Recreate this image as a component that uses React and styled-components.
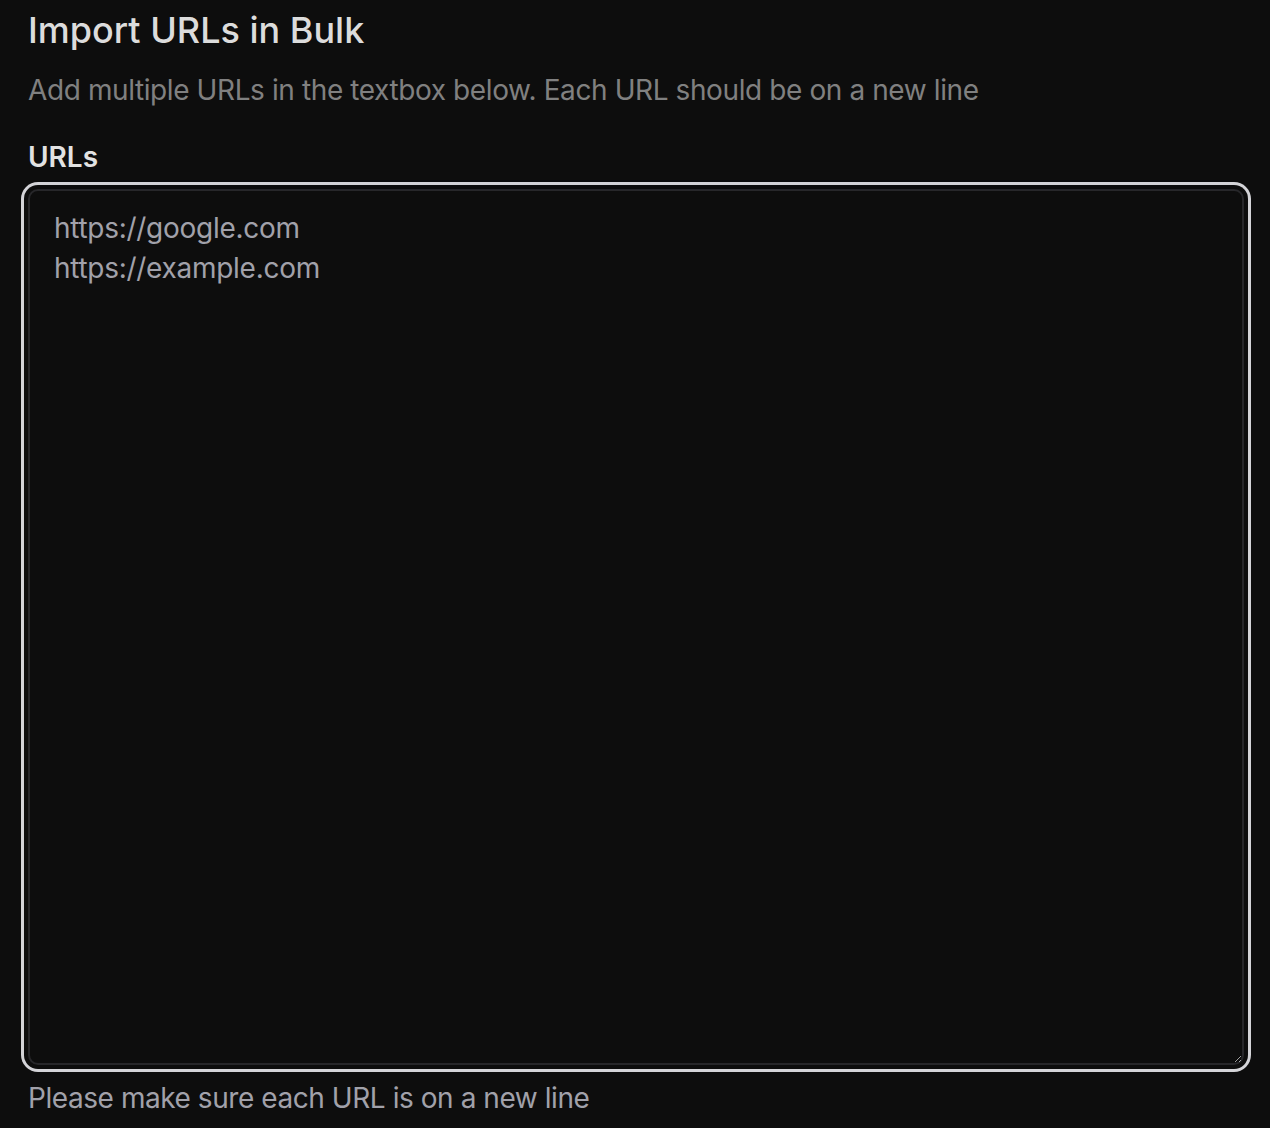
import styled, { createGlobalStyle } from "styled-components";

const Global = createGlobalStyle`
  html, body {
    margin: 0;
    background: #0d0d0d;
    color-scheme: dark;
  }
  body {
    font-family: Inter, "Noto Sans", sans-serif;
  }
`;

const Page = styled.div`
  display: flex;
  flex-direction: column;
  padding: 8px 20px 0 28px;
`;

const Title = styled.h1`
  margin: 0;
  font-size: 36px;
  line-height: 44px;
  font-weight: 500;
  color: #dcdcdc;
  letter-spacing: 0;
`;

const Subtitle = styled.p`
  margin: 18px 0 0;
  font-size: 28px;
  line-height: 40px;
  color: #808080;
  letter-spacing: -0.4px;
`;

const Label = styled.label`
  margin-top: 29px;
  font-size: 28px;
  line-height: 36px;
  font-weight: 600;
  color: #e2e2e2;
  letter-spacing: 0;
`;

const TextArea = styled.textarea`
  box-sizing: border-box;
  margin: 14px 8px 0 0;
  width: 1216px;
  height: 876px;
  padding: 17px 24px;
  background: #0d0d0d;
  border: 2px solid #27272a;
  border-radius: 10px;
  outline: none;
  box-shadow: 0 0 0 4px #0d0d0d, 0 0 0 7px #d4d4d8;
  font-family: Inter, "Noto Sans", sans-serif;
  font-size: 28px;
  line-height: 40px;
  letter-spacing: -0.28px;
  color: #a1a1aa;
`;

const Helper = styled.p`
  margin: 13px 0 0;
  font-size: 28px;
  line-height: 40px;
  color: #a1a1aa;
  letter-spacing: -0.44px;
`;

export default function App() {
  return (
    <>
      <Global />
      <Page>
        <Title>Import URLs in Bulk</Title>
        <Subtitle>
          Add multiple URLs in the textbox below. Each URL should be on a new line
        </Subtitle>
        <Label htmlFor="urls">URLs</Label>
        <TextArea
          id="urls"
          defaultValue={"https://google.com\nhttps://example.com"}
        />
        <Helper>Please make sure each URL is on a new line</Helper>
      </Page>
    </>
  );
}
